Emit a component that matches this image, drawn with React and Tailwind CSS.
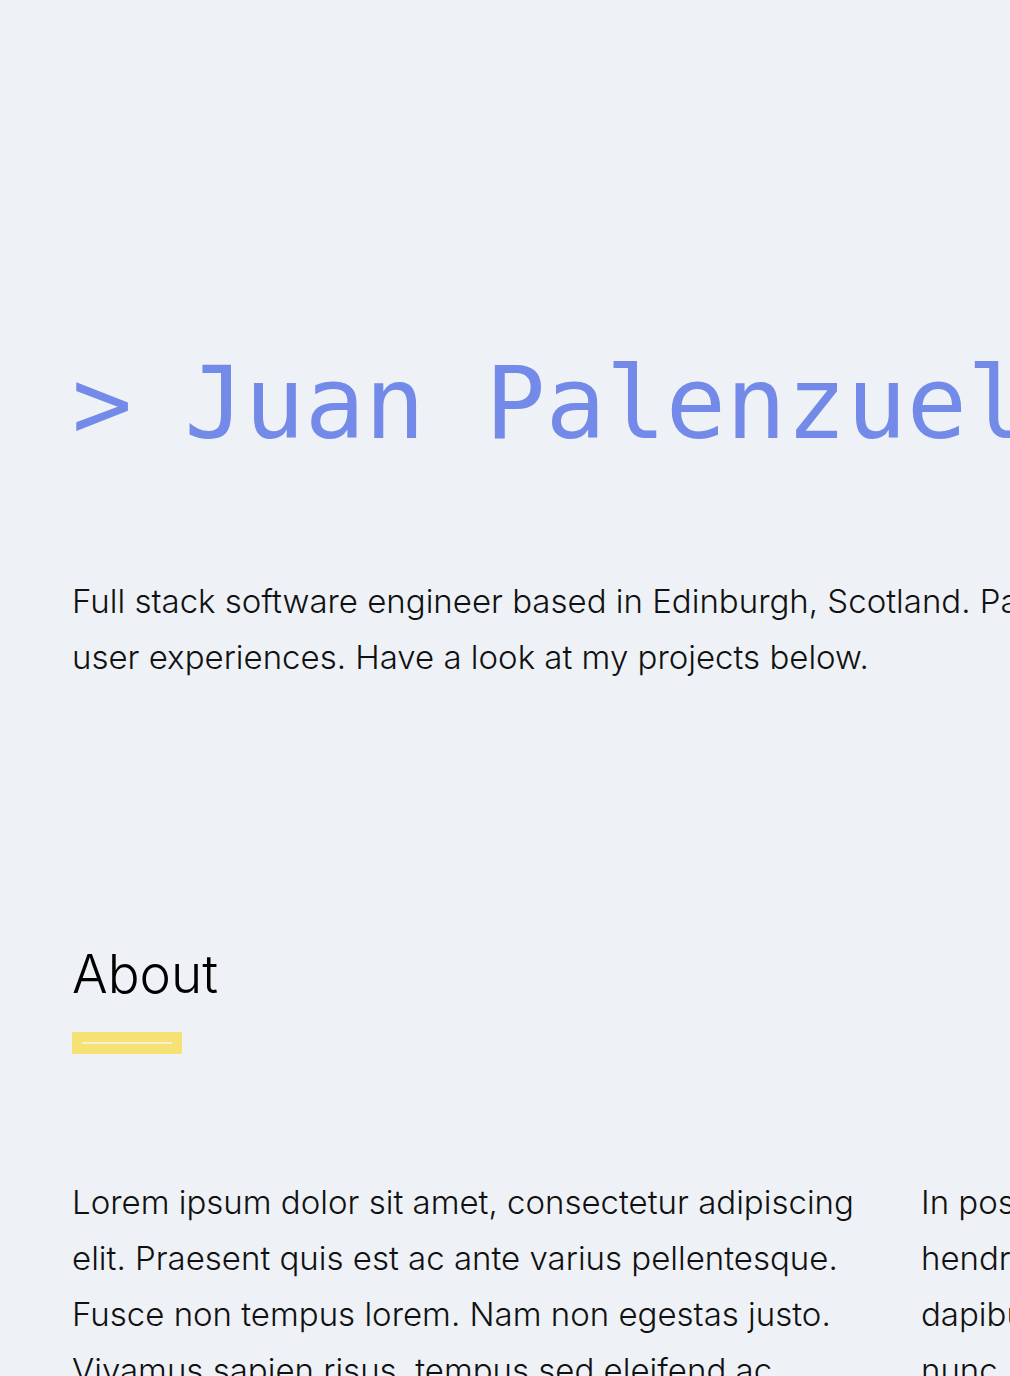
export default function App() {
  return (
    <div className="w-full min-h-screen overflow-hidden bg-[#eef1f6]">
      <div className="w-[1800px] px-[72px] pt-[354px] pb-[200px]">
        <h1 className="flex whitespace-nowrap text-[100px] leading-none font-normal text-[#738ae8] font-['DejaVu_Sans_Mono',monospace]">
          <span>&gt;</span>
          <span className="ml-[52px]">Juan Palenzuela</span>
        </h1>
        <p className="mt-[119px] text-[33px] leading-[56px] font-light text-[#111] font-['Inter',sans-serif] whitespace-nowrap">
          Full stack software engineer based in Edinburgh, Scotland. Passionate about building clean and delightful
          <br />
          user experiences. Have a look at my projects below.
        </p>
        <section className="mt-[263px]">
          <h2 className="text-[53px] leading-none font-light text-black font-['Inter',sans-serif]">About</h2>
          <div className="mt-[31px] flex h-[22px] w-[110px] items-center justify-center bg-[#f6e274]">
            <div className="h-[2px] w-[90px] bg-[#f7f0cf]" />
          </div>
          <div className="mt-[120px] grid grid-cols-[800px_800px] gap-x-[49px] text-[33px] leading-[56px] font-light text-[#111] font-['Inter',sans-serif]">
            <p>
              Lorem ipsum dolor sit amet, consectetur adipiscing elit. Praesent quis est ac ante varius pellentesque. Fusce non tempus lorem. Nam non egestas justo. Vivamus sapien risus, tempus sed eleifend ac, vehicula eu nulla. Aliquam erat volutpat.
            </p>
            <p className="whitespace-nowrap">
              In posuere nisl vitae lectus tincidunt, sit amet
              <br />
              hendrerit ligula tristique. Morbi vel tortor
              <br />
              dapibus, fermentum ex id, tristique nisl. Sed at
              <br />
              nunc. Curabitur feugiat sem quis magna.
            </p>
          </div>
        </section>
      </div>
    </div>
  );
}
